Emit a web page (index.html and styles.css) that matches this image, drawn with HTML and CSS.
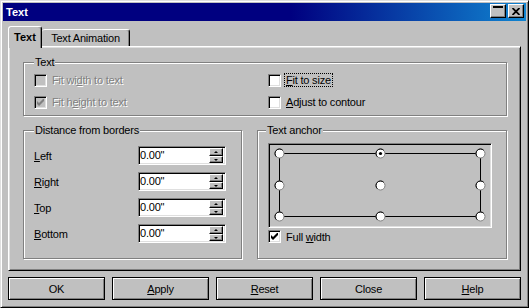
FILE: index.html
```html
<!DOCTYPE html>
<html lang="en">
<head>
  <meta charset="UTF-8">
  <title>Text</title>
  <link rel="stylesheet" href="styles.css">
</head>
<body>

  <div class="window">
    <div class="titlebar">
      <span class="title">Text</span>
      <div class="title-btns">
        <span class="tbtn shade"><i class="bar"></i></span>
        <span class="tbtn">
          <svg width="8" height="7" viewBox="0 0 8 7"><path d="M0.5 0 L7.5 7 M7.5 0 L0.5 7" stroke="#000" stroke-width="1.8"/></svg>
        </span>
      </div>
    </div>

    <div class="content">
      <div class="tabs">
        <div class="tab active">Text</div>
        <div class="tab">Text Animation</div>
      </div>

      <div class="panel">
        <fieldset class="group text-group">
          <legend>Text</legend>
          <div class="cols">
            <div class="col left-col">
              <div class="check disabled">
                <span class="box"></span>
                <span class="lbl">Fit wi<u>d</u>th to text</span>
              </div>
              <div class="check disabled">
                <span class="box"><svg width="7" height="7" viewBox="0 0 7 7"><path d="M0 2 L2 4 L7 -1 L7 2 L2 7 L0 5 Z" fill="#808080"/></svg></span>
                <span class="lbl">Fit h<u>e</u>ight to text</span>
              </div>
            </div>
            <div class="col">
              <div class="check">
                <span class="box"></span>
                <span class="lbl focus"><u>F</u>it to size</span>
              </div>
              <div class="check">
                <span class="box"></span>
                <span class="lbl"><u>A</u>djust to contour</span>
              </div>
            </div>
          </div>
        </fieldset>

        <div class="row">
          <fieldset class="group dist">
            <legend>Distance from borders</legend>
            <div class="field-row">
              <span class="flabel"><u>L</u>eft</span>
              <div class="spinfield"><span class="val">0.00"</span><div class="spin"><span class="sb up"><i></i></span><span class="sb down"><i></i></span></div></div>
            </div>
            <div class="field-row">
              <span class="flabel"><u>R</u>ight</span>
              <div class="spinfield"><span class="val">0.00"</span><div class="spin"><span class="sb up"><i></i></span><span class="sb down"><i></i></span></div></div>
            </div>
            <div class="field-row">
              <span class="flabel"><u>T</u>op</span>
              <div class="spinfield"><span class="val">0.00"</span><div class="spin"><span class="sb up"><i></i></span><span class="sb down"><i></i></span></div></div>
            </div>
            <div class="field-row">
              <span class="flabel"><u>B</u>ottom</span>
              <div class="spinfield"><span class="val">0.00"</span><div class="spin"><span class="sb up"><i></i></span><span class="sb down"><i></i></span></div></div>
            </div>
          </fieldset>

          <fieldset class="group anchor">
            <legend>Text anchor</legend>
            <div class="anchor-frame">
              <svg width="222" height="83" viewBox="0 0 222 83">
                <defs>
                  <g id="pt">
                    <circle r="4.5" fill="#fff" stroke="#808080"/>
                    <path d="M-3.2 3.2 A4.5 4.5 0 0 1 3.2 -3.2" fill="none" stroke="#000"/>
                  </g>
                </defs>
                <rect x="10.5" y="9.5" width="201" height="63" fill="none" stroke="#000"/>
                <use href="#pt" x="10.5" y="9.5"/>
                <use href="#pt" x="111.5" y="9.5"/>
                <use href="#pt" x="211.5" y="9.5"/>
                <use href="#pt" x="10.5" y="41.5"/>
                <use href="#pt" x="111.5" y="41.5"/>
                <use href="#pt" x="211.5" y="41.5"/>
                <use href="#pt" x="10.5" y="72.5"/>
                <use href="#pt" x="111.5" y="72.5"/>
                <use href="#pt" x="211.5" y="72.5"/>
                <circle cx="111.5" cy="9.5" r="1.6" fill="#000"/>
              </svg>
            </div>
            <div class="check full">
              <span class="box"><svg width="7" height="7" viewBox="0 0 7 7"><path d="M0 2 L2 4 L7 -1 L7 2 L2 7 L0 5 Z" fill="#000"/></svg></span>
              <span class="lbl">Full <u>w</u>idth</span>
            </div>
          </fieldset>
        </div>
      </div>

      <div class="buttons">
        <button class="btn">OK</button>
        <button class="btn"><u>A</u>pply</button>
        <button class="btn"><u>R</u>eset</button>
        <button class="btn">Close</button>
        <button class="btn"><u>H</u>elp</button>
      </div>
    </div>
  </div>

</body>
</html>
```

FILE: styles.css
```css
* {
  box-sizing: border-box;
}

body {
  margin: 0;
  font-family: 'Liberation Sans', Arial, sans-serif;
  font-size: 11px;
  letter-spacing: -0.2px;
  color: #000;
  background: #c0c0c0;
}

.window {
  width: 529px;
  height: 308px;
  background: #c0c0c0;
  border: 1px solid;
  border-color: #dfdfdf #000 #000 #dfdfdf;
  box-shadow: inset 1px 1px #fff, inset -1px -1px #808080;
  padding: 2px;
  display: flex;
  flex-direction: column;
}

.titlebar {
  height: 18px;
  display: flex;
  align-items: flex-start;
  padding: 0 2px 0 3px;
  background: linear-gradient(to right, #000080 0%, #000080 55%, #1084d0 100%);
}

.title {
  color: #fff;
  font-weight: bold;
  line-height: 18px;
  letter-spacing: 0;
}

.title-btns {
  margin-left: auto;
  margin-top: 1px;
  display: flex;
  gap: 2px;
}

.tbtn {
  width: 16px;
  height: 14px;
  background: #c0c0c0;
  border: 1px solid;
  border-color: #fff #000 #000 #fff;
  box-shadow: inset -1px -1px #808080;
  display: flex;
  align-items: center;
  justify-content: center;
}

.tbtn svg {
  display: block;
}

.tbtn.shade {
  align-items: flex-start;
  justify-content: flex-start;
}

.tbtn .bar {
  display: block;
  width: 10px;
  height: 2px;
  margin: 1px 0 0 2px;
  background: #000;
}

.content {
  flex: 1;
  padding: 0 5px;
  display: flex;
  flex-direction: column;
}

/* tabs */

.tabs {
  margin-top: 5px;
  display: flex;
  align-items: flex-end;
}

.tab {
  border: 1px solid;
  border-bottom: none;
  border-color: #fff #000 transparent #fff;
  box-shadow: inset -1px 0 #808080;
  border-radius: 3px 3px 0 0;
  background: #c0c0c0;
  line-height: 13px;
  text-align: center;
}

.tab.active {
  position: relative;
  z-index: 2;
  width: 34px;
  height: 22px;
  margin-bottom: -2px;
  padding-top: 4px;
  font-weight: bold;
  letter-spacing: 0;
}

.tab:not(.active) {
  width: 88px;
  height: 17px;
  padding-top: 2px;
  border-left: none;
}

/* panel */

.panel {
  height: 225px;
  border: 1px solid;
  border-color: #fff #000 #000 #fff;
  box-shadow: inset 1px 1px #dfdfdf, inset -1px -1px #808080;
  padding: 9px 13px 11px 14px;
}

.group {
  margin: 0;
  min-width: 0;
  border: 1px solid #808080;
  box-shadow: 1px 1px 0 #fff, inset 1px 1px 0 #fff;
}

.group legend {
  padding: 0 1px;
  line-height: 13px;
  background: #c0c0c0;
}

.text-group {
  padding: 0 12px 2px 10px;
}

.cols {
  display: flex;
}

.left-col {
  width: 234px;
}

.check {
  height: 22px;
  display: flex;
  align-items: center;
  gap: 5px;
}

.box {
  width: 13px;
  height: 13px;
  flex: none;
  border: 1px solid;
  border-color: #808080 #fff #fff #808080;
  box-shadow: inset 1px 1px #000, inset -1px -1px #dfdfdf;
  background: #fff;
  display: flex;
  align-items: center;
  justify-content: center;
}

.box svg {
  display: block;
}

.check.disabled .box {
  background: #c0c0c0;
}

.check.disabled .lbl {
  color: #808080;
  text-shadow: 1px 1px 0 #fff;
}

.lbl.focus {
  outline: 1px dotted #000;
  margin-left: -1px;
  padding: 0 1px;
}

.row {
  margin-top: 8px;
  display: flex;
  gap: 15px;
}

.dist {
  width: 219px;
  padding: 9px 14px 15px 10px;
}

.field-row {
  height: 19px;
  display: flex;
  align-items: center;
  margin-bottom: 7px;
}

.field-row:last-child {
  margin-bottom: 0;
}

.flabel {
  width: 104px;
}

.spinfield {
  width: 88px;
  height: 19px;
  border: 1px solid;
  border-color: #808080 #fff #fff #808080;
  box-shadow: inset 1px 1px #000, inset -1px -1px #dfdfdf;
  background: #fff;
  padding: 1px;
  display: flex;
}

.val {
  line-height: 15px;
}

.spin {
  margin-left: auto;
  margin-right: 1px;
  width: 14px;
  display: flex;
  flex-direction: column;
}

.sb {
  height: 8px;
  background: #c0c0c0;
  border: 1px solid;
  border-color: #fff #000 #000 #fff;
  box-shadow: inset -1px -1px #808080;
  display: flex;
  align-items: center;
  justify-content: center;
}

.sb.down {
  height: 7px;
}

.sb i {
  width: 0;
  height: 0;
  border-left: 2px solid transparent;
  border-right: 2px solid transparent;
}

.sb.up i {
  border-bottom: 2px solid #000;
}

.sb.down i {
  border-top: 2px solid #000;
}

.anchor {
  width: 250px;
  padding: 6px 13px 15px 10px;
}

.anchor legend {
  margin-left: -2px;
}

.anchor-frame {
  width: 224px;
  height: 85px;
  border: 1px solid;
  border-color: #808080 #fff #fff #808080;
  box-shadow: inset 1px 1px #000, inset -1px -1px #dfdfdf;
}

.anchor-frame svg {
  display: block;
}

.check.full {
  height: 13px;
  margin-top: 2px;
}

/* buttons */

.buttons {
  margin-top: 6px;
  display: flex;
  gap: 7px;
}

.btn {
  flex: 1;
  height: 23px;
  padding: 0;
  font-family: inherit;
  font-size: 11px;
  letter-spacing: -0.2px;
  color: #000;
  background: #c0c0c0;
  border: 1px solid #000;
  border-radius: 0;
  box-shadow: inset 1px 1px #fff, inset -1px -1px #808080;
}
```
